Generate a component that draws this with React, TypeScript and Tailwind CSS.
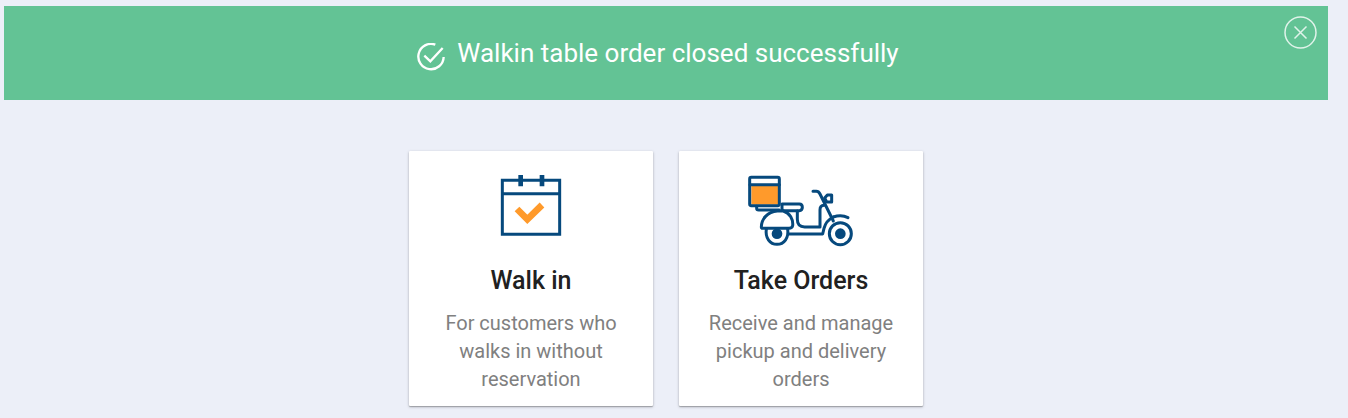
import { useState } from "react";

const CalendarIcon = () => (
  <svg viewBox="30 30 186 186" className="h-[62px] w-[62px]" fill="none" aria-hidden="true">
    <path d="M37 46H209V208H37Z" stroke="#06497d" strokeWidth="9" />
    <path d="M37 86H209" stroke="#06497d" strokeWidth="9" />
    <path d="M92 30V64M156 30V64" stroke="#06497d" strokeWidth="14" />
    <path d="M81 132L112 163L156 120" stroke="#ff9a2b" strokeWidth="20" />
  </svg>
);

const ScooterIcon = () => (
  <svg
    viewBox="24 30 318 216"
    className="h-[72px] w-[106px]"
    fill="none"
    stroke="#06497d"
    strokeWidth="9"
    strokeLinecap="round"
    strokeLinejoin="round"
    aria-hidden="true"
  >
    {/* box */}
    <path d="M34 60H116V119H34Z" fill="#ff9a2b" stroke="none" />
    <rect x="29" y="37" width="89" height="85" rx="5" />
    <path d="M30 59H118" />

    {/* seat and rack */}
    <path d="M50 124V130Q50 135 56 135H118" />
    <path d="M126 117H178Q187 117 187 127Q187 137 178 137H132Q126 137 126 131Z" />

    {/* rear body */}
    <path d="M64 186C64 162 82 141 112 138H130C150 144 160 164 158 182Q156 190 147 190H68Q64 190 64 186Z" />

    {/* floor and front shield */}
    <path d="M172 138V163Q172 186 194 186H240V134Q240 122 252 121" />
    <path d="M148 207H248L252 190C256 174 266 163 280 156" />

    {/* fork and handlebar */}
    <path d="M219 79H229Q236 79 240 87L280 168" />
    <path d="M254 99L262 90H275V111H260Z" />
    <path d="M280 156C296 151 312 152 324 158" />

    {/* wheels */}
    <path d="M79 192C75 219 90 238 111 238C132 238 147 219 143 192" />
    <circle cx="301" cy="206" r="33" />
    <circle cx="111" cy="206" r="16" fill="#06497d" stroke="none" />
    <circle cx="301" cy="206" r="16" fill="#06497d" stroke="none" />
  </svg>
);

const options = [
  {
    title: "Walk in",
    text: "For customers who walks in without reservation",
    icon: <CalendarIcon />,
  },
  {
    title: "Take Orders",
    text: "Receive and manage pickup and delivery orders",
    icon: <ScooterIcon />,
  },
];

const App = () => {
  const [showAlert, setShowAlert] = useState(true);

  return (
    <div className="min-h-screen bg-[#eceff8] pt-1.5 pr-5 pb-3 pl-1 font-['Roboto',sans-serif]">

      {showAlert && (
        <div role="status" className="relative flex items-center justify-center bg-[#63c395] py-7 pr-16 pl-12 text-white">
          <svg viewBox="0 0 84 84" className="mt-2 mr-3 h-7 w-7 shrink-0" fill="none" stroke="currentColor" strokeWidth="7" aria-hidden="true">
            <path d="M55 5A38 38 0 1 0 80 42" />
            <path d="M22 38L40 55L77 15" />
          </svg>

          <p className="text-[26px] leading-[38px]">
            Walkin table order closed successfully
          </p>

          <button
            type="button"
            aria-label="Close"
            onClick={() => setShowAlert(false)}
            className="absolute top-2.5 right-[11px] cursor-pointer"
          >
            <svg viewBox="0 0 33 33" className="h-[33px] w-[33px]" fill="none" stroke="#e0f3ea" strokeWidth="1.5" aria-hidden="true">
              <circle cx="16.5" cy="16.5" r="15.5" />
              <path d="M10.5 10.5L22.5 22.5M22.5 10.5L10.5 22.5" />
            </svg>
          </button>
        </div>
      )}

      <div className="mt-[51px] flex flex-wrap justify-center gap-[26px]">
        {options.map((option) => (
          <button
            key={option.title}
            type="button"
            className="flex w-[244px] cursor-pointer flex-col items-center rounded-[1px] bg-white px-6 pt-6 pb-[13px] text-center shadow-[0_1px_3px_rgba(0,0,0,0.25),0_1px_1px_rgba(0,0,0,0.2)]"
          >
            <span className="flex h-[72px] items-start">{option.icon}</span>
            <span className="mt-4 text-[25px] leading-9 font-medium text-[#212121]">
              {option.title}
            </span>
            <span className="mt-2.5 text-[20px] leading-7 text-[#808080]">
              {option.text}
            </span>
          </button>
        ))}
      </div>

    </div>
  );
};

export default App;
